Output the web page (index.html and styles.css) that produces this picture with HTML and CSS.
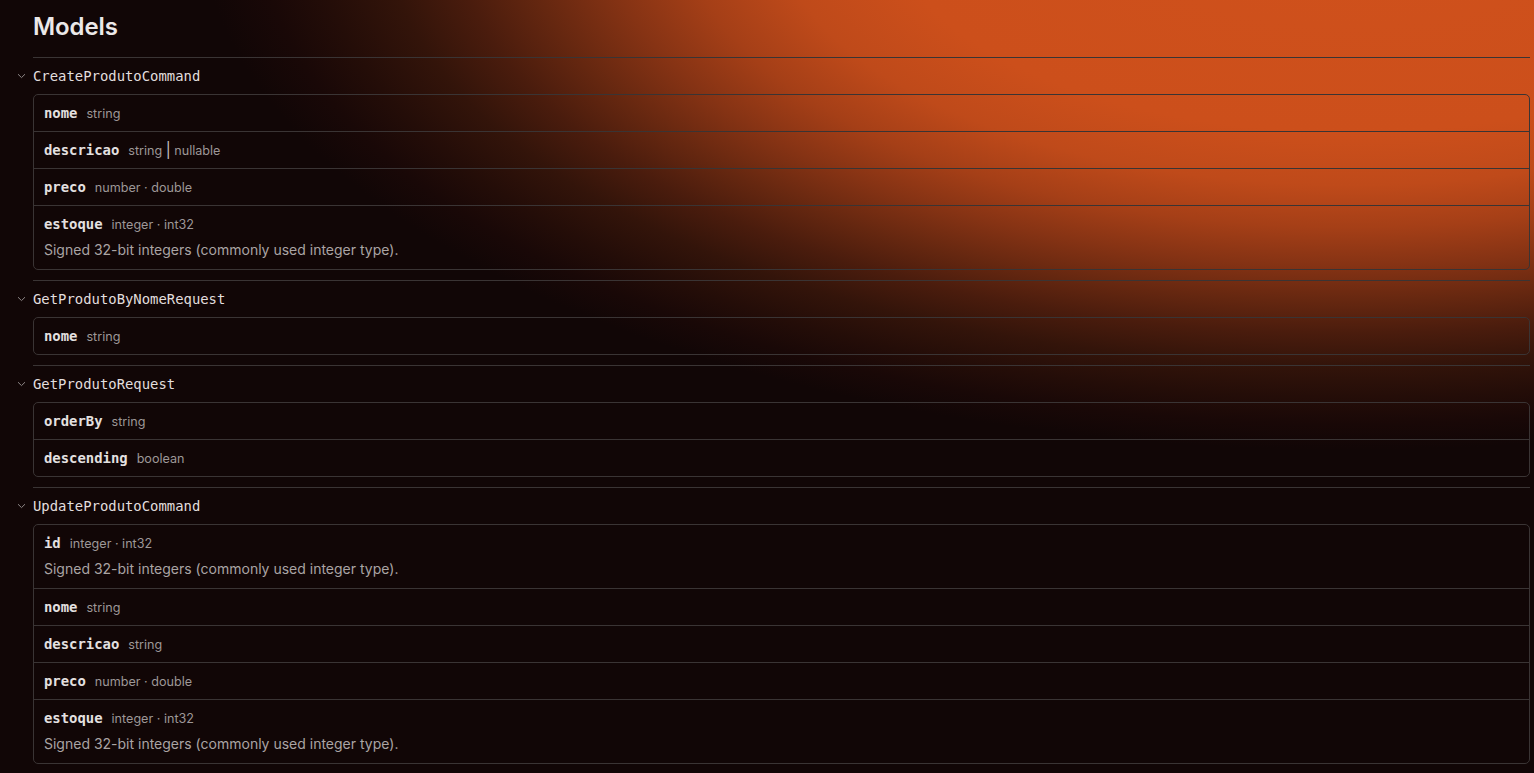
FILE: index.html
```html
<!DOCTYPE html>
<html lang="en">
<head>
<meta charset="utf-8">
<title>Models</title>
<link rel="stylesheet" href="styles.css">
</head>
<body>
<div class="glow"></div>
<main class="models">
  <h2 class="title">Models</h2>

  <section class="model">
    <div class="model-head">
      <svg class="chev" width="9" height="6" viewBox="0 0 9 6"><path d="M1 1.2 L4.5 4.6 L8 1.2" fill="none" stroke="#8d8787" stroke-width="1"/></svg>
      <span class="model-name">CreateProdutoCommand</span>
    </div>
    <div class="card">
      <div class="prop"><div class="line"><span class="pname">nome</span><span class="ptype">string</span></div></div>
      <div class="prop"><div class="line"><span class="pname">descricao</span><span class="ptype">string <span class="bar">|</span> nullable</span></div></div>
      <div class="prop"><div class="line"><span class="pname">preco</span><span class="ptype">number · double</span></div></div>
      <div class="prop"><div class="line"><span class="pname">estoque</span><span class="ptype">integer · int32</span></div><p class="desc">Signed 32-bit integers (commonly used integer type).</p></div>
    </div>
  </section>

  <section class="model">
    <div class="model-head">
      <svg class="chev" width="9" height="6" viewBox="0 0 9 6"><path d="M1 1.2 L4.5 4.6 L8 1.2" fill="none" stroke="#8d8787" stroke-width="1"/></svg>
      <span class="model-name">GetProdutoByNomeRequest</span>
    </div>
    <div class="card">
      <div class="prop"><div class="line"><span class="pname">nome</span><span class="ptype">string</span></div></div>
    </div>
  </section>

  <section class="model">
    <div class="model-head">
      <svg class="chev" width="9" height="6" viewBox="0 0 9 6"><path d="M1 1.2 L4.5 4.6 L8 1.2" fill="none" stroke="#8d8787" stroke-width="1"/></svg>
      <span class="model-name">GetProdutoRequest</span>
    </div>
    <div class="card">
      <div class="prop"><div class="line"><span class="pname">orderBy</span><span class="ptype">string</span></div></div>
      <div class="prop"><div class="line"><span class="pname">descending</span><span class="ptype">boolean</span></div></div>
    </div>
  </section>

  <section class="model">
    <div class="model-head">
      <svg class="chev" width="9" height="6" viewBox="0 0 9 6"><path d="M1 1.2 L4.5 4.6 L8 1.2" fill="none" stroke="#8d8787" stroke-width="1"/></svg>
      <span class="model-name">UpdateProdutoCommand</span>
    </div>
    <div class="card">
      <div class="prop"><div class="line"><span class="pname">id</span><span class="ptype">integer · int32</span></div><p class="desc">Signed 32-bit integers (commonly used integer type).</p></div>
      <div class="prop"><div class="line"><span class="pname">nome</span><span class="ptype">string</span></div></div>
      <div class="prop"><div class="line"><span class="pname">descricao</span><span class="ptype">string</span></div></div>
      <div class="prop"><div class="line"><span class="pname">preco</span><span class="ptype">number · double</span></div></div>
      <div class="prop"><div class="line"><span class="pname">estoque</span><span class="ptype">integer · int32</span></div><p class="desc">Signed 32-bit integers (commonly used integer type).</p></div>
    </div>
  </section>
</main>
</body>
</html>
```

FILE: styles.css
```css
html, body {
  margin: 0;
  padding: 0;
}
body {
  background: #110606;
  color: #e6e2e2;
  font-family: Inter, "Noto Sans", sans-serif;
  min-height: 773px;
  overflow: hidden;
  position: relative;
}
.glow {
  position: absolute;
  top: 0;
  left: 0;
  right: 0;
  height: 773px;
  background: radial-gradient(ellipse 1150px 530px at 1350px -80px,
    #d0511c 0%, #cc4f1b 40%, #bf4a1a 50%, #a53f17 58%, #863314 65%,
    #652710 72%, #4a1c0d 78%, #33140a 84%, #240d08 90%, #190807 95%,
    #110606 100%);
  pointer-events: none;
  z-index: 0;
}
.models {
  position: relative;
  z-index: 1;
  padding: 11px 4px 0 33px;
}
.title {
  margin: 0 0 14px;
  font-size: 24px;
  line-height: 32px;
  font-weight: 600;
  color: #ebe8e8;
  letter-spacing: -0.1px;
}
.model {
  border-top: 1px solid #3a3434;
  padding-bottom: 10px;
}
.model-head {
  height: 36px;
  display: flex;
  align-items: center;
  gap: 7px;
  margin-left: -16px;
}
.chev {
  display: block;
  width: 9px;
  height: 6px;
  flex: none;
}
.model-name {
  font-family: "DejaVu Sans Mono", "Liberation Mono", monospace;
  font-size: 13.9px;
  color: #e2dede;
}
.card {
  border: 1px solid #3a3434;
  border-radius: 5px;
}
.prop {
  padding: 9px 10px;
}
.prop + .prop {
  border-top: 1px solid #3a3434;
}
.line {
  display: flex;
  align-items: baseline;
  gap: 9px;
  height: 18px;
  line-height: 18px;
}
.pname {
  font-family: "DejaVu Sans Mono", "Liberation Mono", monospace;
  font-weight: 700;
  font-size: 13.9px;
  color: #e4e0e0;
}
.ptype {
  font-size: 12.6px;
  color: #9d9797;
}
.bar {
  color: #c9c4c4;
  font-size: 15px;
}
.desc {
  margin: 6px 0 0;
  font-size: 14px;
  line-height: 21px;
  color: #aaa4a4;
}
```
